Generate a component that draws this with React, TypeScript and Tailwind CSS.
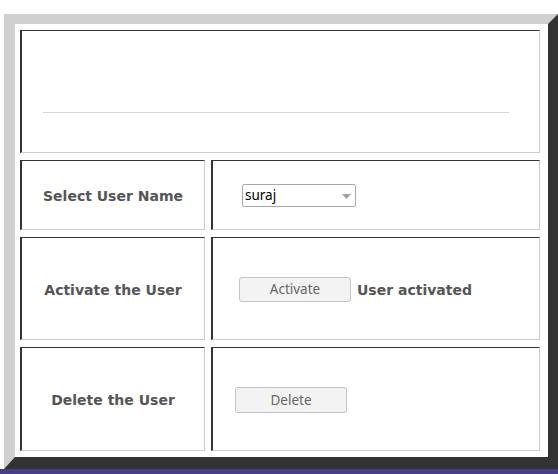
const label = "font-['DejaVu_Sans',Verdana,sans-serif] text-[14px] font-bold text-[#555]";
const ui = "font-['Noto_Sans','Open_Sans',sans-serif] text-[13.5px]";
const cell = "border-t border-l-2 border-r border-b border-t-[#333] border-l-[#333] border-r-[#ccc] border-b-[#ccc] bg-white";

function Row({ title, h, children, pl }: { title: string; h: string; children: React.ReactNode; pl: string }) {
  return (
    <div className={`flex gap-[6px] ${h}`}>
      <div className={`${cell} w-[185px] flex items-center justify-center pt-[3px]`}>
        <span className={label}>{title}</span>
      </div>
      <div className={`${cell} flex-1 flex items-center ${pl}`}>{children}</div>
    </div>
  );
}

function Btn({ children, w }: { children: React.ReactNode; w: string }) {
  return (
    <button type="button" className={`${ui} ${w} text-[#666] bg-[#f3f3f3] border border-[#c4c4c4] rounded-[3px] flex items-center justify-center`}>
      {children}
    </button>
  );
}

export default function App() {
  return (
    <div className="w-[558px] h-[474px] bg-white flex flex-col overflow-hidden">
      <div className="h-[14px]" />
      <div className="ml-[4px] w-[554px] h-[455px] border-t-[10px] border-l-[11px] border-r-[10px] border-b-[12px] border-t-[#d0d0d0] border-l-[#d0d0d0] border-r-[#333] border-b-[#333] bg-white pt-[6px] pl-[5px] pr-[8px] pb-[6px] flex flex-col gap-[7px]">
        <div className={`${cell} h-[123px] flex flex-col pt-[81px] pl-[21px] pr-[30px]`}>
          <div className="h-px bg-[#d4d4d4]" />
        </div>
        <Row title="Select User Name" h="h-[70px]" pl="pl-[29px]">
          <div className="relative w-[114px] h-[23px] border border-[#aaa] rounded-[2px] bg-white flex items-center pl-[2px]">
            <span className={`${ui} text-black`}>suraj</span>
            <svg className="absolute right-[4px] top-[9px]" width="9" height="5" viewBox="0 0 9 5">
              <path d="M0 0h9L4.5 5z" fill="#a0a0a0" />
            </svg>
          </div>
        </Row>
        <Row title="Activate the User" h="h-[103px]" pl="pl-[26px] pt-[2px]">
          <div className="flex items-center gap-[6px]">
            <Btn w="w-[112px] h-[25px]">Activate</Btn>
            <span className={`${label} pt-[1px]`}>User activated</span>
          </div>
        </Row>
        <Row title="Delete the User" h="h-[104px]" pl="pl-[22px] pt-[2px]">
          <Btn w="w-[112px] h-[26px]">Delete</Btn>
        </Row>
      </div>
      <div className="h-[5px] bg-[#483d8b]" />
    </div>
  );
}
